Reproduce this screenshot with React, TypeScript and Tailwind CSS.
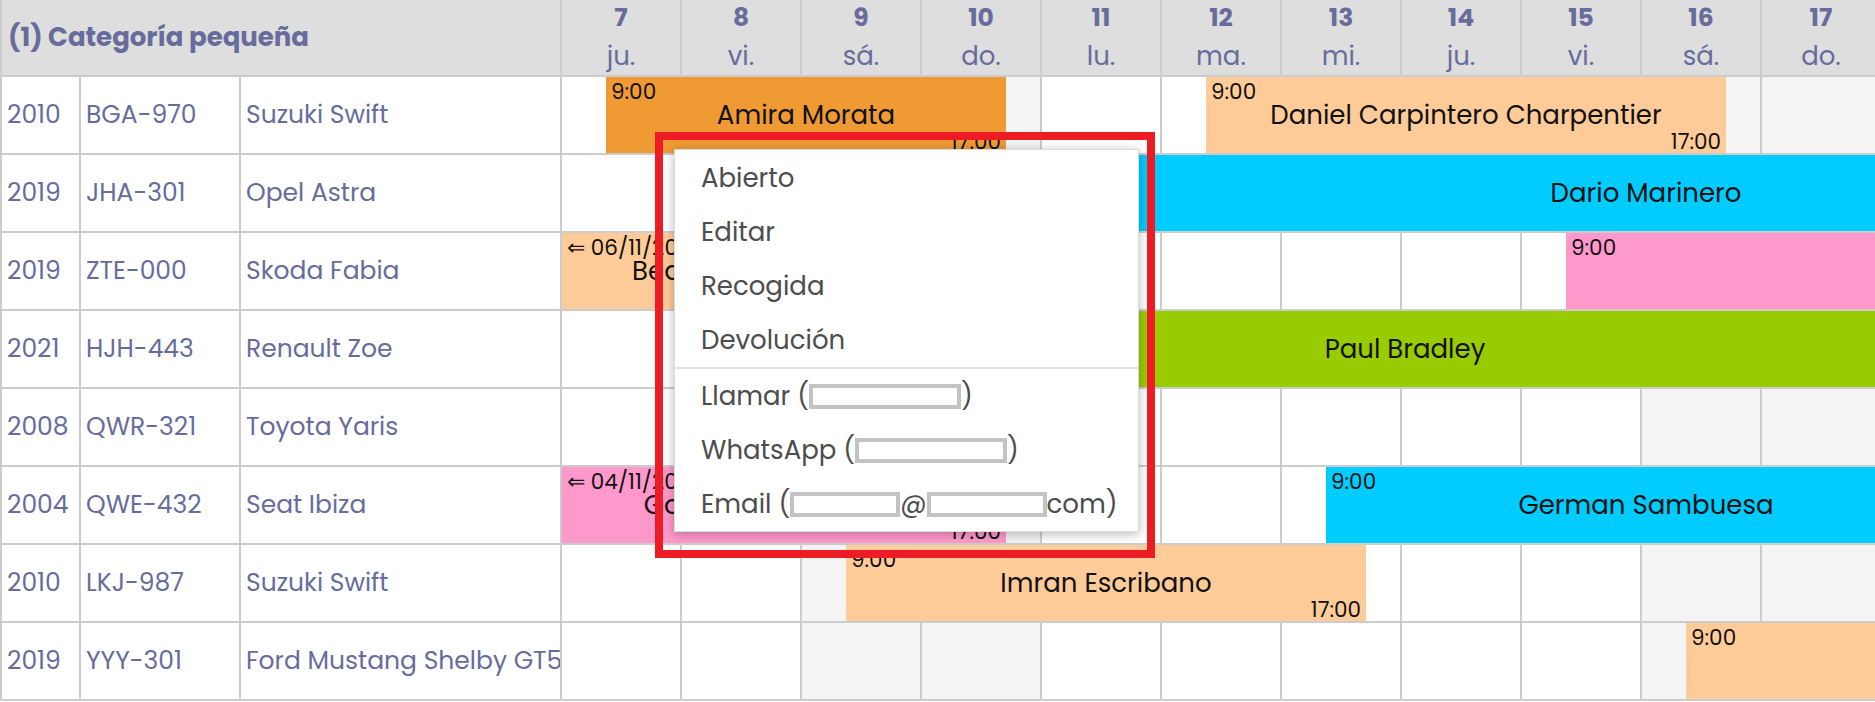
import React from "react";

type Bar = {
  s: number;
  e: number;
  c: string;
  t?: string;
  n?: string;
  b?: string;
};

type Row = { y: string; p: string; m: string; bars: Bar[] };

const days = [
  { n: 7, d: "ju." },
  { n: 8, d: "vi." },
  { n: 9, d: "sá." },
  { n: 10, d: "do." },
  { n: 11, d: "lu." },
  { n: 12, d: "ma." },
  { n: 13, d: "mi." },
  { n: 14, d: "ju." },
  { n: 15, d: "vi." },
  { n: 16, d: "sá." },
  { n: 17, d: "do." },
];
const weekend = [false, false, true, true, false, false, false, false, false, true, true];

const ORANGE = "bg-[#f09a33]";
const PEACH = "bg-[#ffcc99]";
const CYAN = "bg-[#00ccff]";
const PINK = "bg-[#ff99cc]";
const GREEN = "bg-[#99cc00]";

const rows: Row[] = [
  {
    y: "2010",
    p: "BGA-970",
    m: "Suzuki Swift",
    bars: [
      { s: 44, e: 444, c: ORANGE, t: "9:00", n: "Amira Morata", b: "17:00" },
      { s: 644, e: 1164, c: PEACH, t: "9:00", n: "Daniel Carpintero Charpentier", b: "17:00" },
    ],
  },
  {
    y: "2019",
    p: "JHA-301",
    m: "Opel Astra",
    bars: [{ s: 164, e: 2004, c: CYAN, t: "9:00", n: "Dario Marinero" }],
  },
  {
    y: "2019",
    p: "ZTE-000",
    m: "Skoda Fabia",
    bars: [
      { s: 0, e: 325, c: PEACH, t: "⇐ 06/11/2023", n: "Beatriz Ortega", b: "17:00" },
      { s: 1004, e: 2204, c: PINK, t: "9:00", n: "Lucía Herrera" },
    ],
  },
  {
    y: "2021",
    p: "HJH-443",
    m: "Renault Zoe",
    bars: [{ s: 164, e: 1522, c: GREEN, t: "9:00", n: "Paul Bradley" }],
  },
  { y: "2008", p: "QWR-321", m: "Toyota Yaris", bars: [] },
  {
    y: "2004",
    p: "QWE-432",
    m: "Seat Ibiza",
    bars: [
      { s: 0, e: 444, c: PINK, t: "⇐ 04/11/2023", n: "Gonzalo Martínez Ruiz", b: "17:00" },
      { s: 764, e: 1404, c: CYAN, t: "9:00", n: "German Sambuesa" },
    ],
  },
  {
    y: "2010",
    p: "LKJ-987",
    m: "Suzuki Swift",
    bars: [{ s: 284, e: 804, c: PEACH, t: "9:00", n: "Imran Escribano", b: "17:00" }],
  },
  {
    y: "2019",
    p: "YYY-301",
    m: "Ford Mustang Shelby GT500",
    bars: [{ s: 1124, e: 1924, c: PEACH, t: "9:00", n: "Raquel Domínguez" }],
  },
];

function Redact({ w }: { w: string }) {
  return (
    <span
      className={`inline-block ${w} h-[25px] border-[4px] border-[#c3c3c3] bg-white align-[-4px]`}
    />
  );
}

function EventBar({ bar }: { bar: Bar }) {
  return (
    <div
      className={`absolute top-0 bottom-0 flex flex-col overflow-hidden text-[#111111] ${bar.c}`}
      style={{ left: bar.s, width: bar.e - bar.s }}
    >
      <div className="h-[24px] shrink-0 whitespace-nowrap pl-[5px] pt-[3px] text-[21.5px] leading-[24px]">
        {bar.t ?? ""}
      </div>
      <div className="shrink-0 whitespace-nowrap text-center text-[26px] leading-[28px]">
        {bar.n ?? ""}
      </div>
      {bar.b && (
        <div className="mt-auto whitespace-nowrap pr-[5px] text-right text-[21.5px] leading-[22px]">
          {bar.b}
        </div>
      )}
    </div>
  );
}

export default function App() {
  return (
    <div
      className="relative h-[702px] w-[1875px] overflow-hidden bg-white text-[#676c9d]"
      style={{ fontFamily: "Poppins, 'Open Sans', 'Noto Sans', sans-serif" }}
    >
      {/* Header */}
      <div className="flex h-[77px] border-b-2 border-[#cccccc] bg-[#dedede]">
        <div className="flex w-[562px] shrink-0 items-center border-l-2 border-r-2 border-[#cccccc] pl-[6px] text-[26px] font-bold">
          (1) Categoría pequeña
        </div>
        {days.map((d, i) => (
          <div
            key={i}
            className="flex w-[120px] shrink-0 flex-col items-center border-r-2 border-[#cccccc]"
          >
            <div className="mt-[4px] text-[25px] font-bold leading-[28px]">{d.n}</div>
            <div className="mt-[8px] text-[26px] leading-[32px]">{d.d}</div>
          </div>
        ))}
      </div>

      {/* Body rows */}
      {rows.map((r, ri) => (
        <div key={ri} className="flex h-[78px] border-b-2 border-[#cccccc] text-[25px]">
          <div className="flex w-[81px] shrink-0 items-center border-l-2 border-r-2 border-[#cccccc] pl-[5px]">
            {r.y}
          </div>
          <div className="flex w-[160px] shrink-0 items-center border-r-2 border-[#cccccc] pl-[5px]">
            {r.p}
          </div>
          <div className="flex w-[321px] shrink-0 items-center overflow-hidden whitespace-nowrap border-r-2 border-[#cccccc] pl-[5px]">
            {r.m}
          </div>
          <div className="relative flex shrink-0">
            {days.map((_, i) => (
              <div
                key={i}
                className={`h-full w-[120px] shrink-0 border-r-2 border-[#cccccc] ${
                  weekend[i] ? "bg-[#f4f4f4]" : "bg-white"
                }`}
              />
            ))}
            {r.bars.map((b, bi) => (
              <EventBar key={bi} bar={b} />
            ))}
          </div>
        </div>
      ))}

      {/* Context menu */}
      <div className="absolute left-[674px] top-[149px] w-[465px] border border-[#dcdcdc] bg-white pt-[1px] text-[26px] text-[#4d4d4d] shadow-[0_2px_10px_rgba(0,0,0,0.28)]">
        <div className="flex h-[54px] items-center pl-[26px]">Abierto</div>
        <div className="flex h-[54px] items-center pl-[26px]">Editar</div>
        <div className="flex h-[54px] items-center pl-[26px]">Recogida</div>
        <div className="flex h-[54px] items-center pl-[26px]">Devolución</div>
        <div className="border-t-2 border-[#e2e2e2]" />
        <div className="flex h-[54px] items-center whitespace-nowrap pl-[26px]">
          Llamar (<Redact w="w-[152px]" />)
        </div>
        <div className="flex h-[54px] items-center whitespace-nowrap pl-[26px]">
          WhatsApp (<Redact w="w-[152px]" />)
        </div>
        <div className="flex h-[54px] items-center whitespace-nowrap pl-[26px]">
          Email (<Redact w="w-[110px]" />@<Redact w="w-[120px]" />com)
        </div>
      </div>

      {/* Red highlight box */}
      <div className="pointer-events-none absolute left-[655px] top-[132px] h-[426px] w-[500px] border-[8px] border-[#ed1c24]" />
    </div>
  );
}
